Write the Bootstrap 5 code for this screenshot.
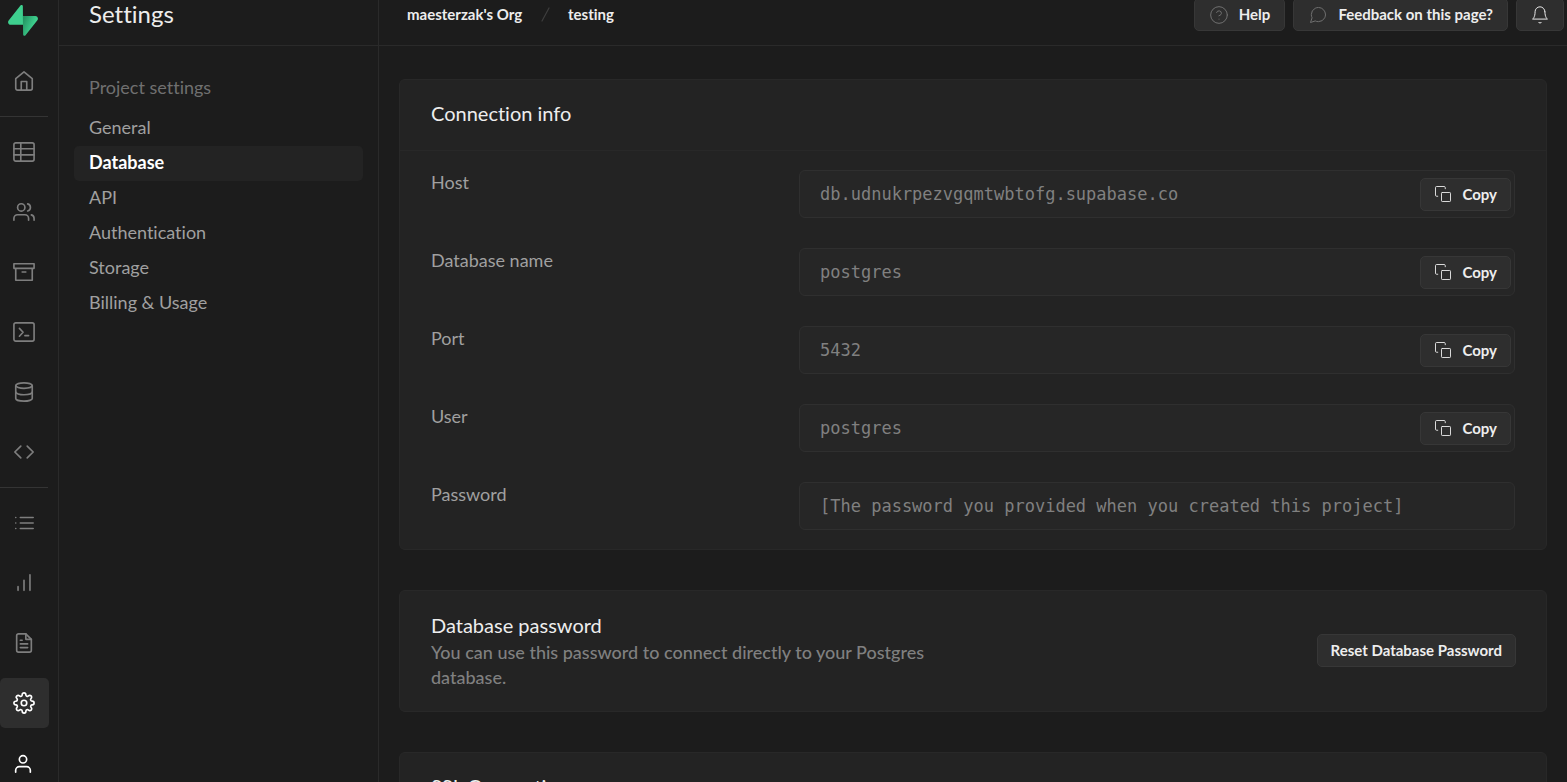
<!DOCTYPE html>
<html lang="en">
<head>
<meta charset="utf-8">
<meta name="viewport" content="width=device-width, initial-scale=1">
<title>Settings | Database</title>
<link href="https://cdn.jsdelivr.net/npm/bootstrap@5.3.0/dist/css/bootstrap.min.css" rel="stylesheet">
<style>
  :root {
    --line: #2a2a2a;
    --ink: #ededed;
    --soft: #a0a0a0;
    --muted: #707070;
  }
  body {
    background: #1c1c1c;
    color: var(--ink);
    font-family: Lato, "Liberation Sans", sans-serif;
    font-size: 18px;
    line-height: 25px;
    font-variant-ligatures: none;
  }
  a { color: inherit; text-decoration: none; }
  svg { fill: none; stroke: currentColor; stroke-width: 1.5; stroke-linecap: round; stroke-linejoin: round; display: block; flex: none; }

  /* icon rail */
  .rail { width: 59px; border-right: 1px solid var(--line); color: #7e7e7e; }
  .rail-items { width: 49px; gap: 10px; padding-top: 10px; }
  .rail-items svg { stroke-width: 1.8; }
  .rail-logo { height: 46px; padding: 5px 0 0 8px; }
  .rail-link { height: 50px; border-radius: 5px; padding-right: 1px; }
  .rail-link.on { background: #2e2e2e; color: #fff; }
  .rail-link.lit { color: #fff; padding-right: 3px; }
  .rail hr { margin: 0; border-color: #343434; opacity: 1; width: 48px; }

  /* settings menu */
  .menu { width: 320px; border-right: 1px solid var(--line); }
  .topline { height: 46px; border-bottom: 1px solid var(--line); }
  .menu .topline { padding-left: 30px; }
  .menu h1 { font-size: 24px; line-height: 27px; font-weight: 400; }
  .menu-body { padding: 29px 15px 0; }
  .menu-title { padding: 0 15px 11px; color: var(--muted); }
  .menu .nav-link { padding: 4px 15px 6px; color: var(--soft); border-radius: 5px; }
  .menu .nav-link.active { background: #232323; color: #fff; font-weight: 700; }

  /* top bar */
  .topbar { padding: 0 3px 0 28px; font-size: 15px; font-weight: 700; }
  .crumbs { gap: 16px; line-height: 29px; }
  .crumbs svg { color: #3e3e3e; margin-top: 6px; }
  .top-actions { gap: 8px; margin-top: -2px; }

  .btn-dim {
    --bs-btn-color: #ededed; --bs-btn-bg: #2e2e2e; --bs-btn-border-color: #373737;
    --bs-btn-hover-color: #fff; --bs-btn-hover-bg: #343434; --bs-btn-hover-border-color: #444;
    --bs-btn-padding-x: 13px; --bs-btn-padding-y: 4px;
    --bs-btn-font-size: 15px; --bs-btn-font-weight: 700; --bs-btn-line-height: 23px; --bs-btn-border-radius: 5px;
    display: inline-flex; align-items: center; gap: 10px; white-space: nowrap; flex: none;
  }
  .top-actions .btn-dim { --bs-btn-padding-x: 14px; }
  .btn-dim svg { stroke-width: 1.2; }
  .faint { color: #707070; }

  /* panels */
  .panels { padding: 33px 20px 0; gap: 40px; }
  .panel { background: #232323; border: 1px solid #282828; border-radius: 6px; }
  .panel h2 { font-size: 20px; line-height: 29px; font-weight: 400; margin: 0; }
  .panel-head { padding: 19px 31px 22px; border-bottom: 1px solid #282828; }
  .panel-rows { padding: 19px 31px; gap: 30px; }
  .panel-rows .row { --bs-gutter-x: 20px; }
  .panel-rows label { color: var(--soft); }
  .field { background: #262626; border: 1px solid #2f2f2f; border-radius: 6px; padding-right: 3px; height: 48px; }
  .field input {
    flex: 1; min-width: 0; padding: 0 20px; border: 0; background: transparent; color: #808080;
    font-family: "DejaVu Sans Mono", "Liberation Mono", monospace; font-size: 17px; line-height: 25px; outline: 0;
  }
  .panel-note { padding: 20px 30px 21px 31px; }
  .panel-note p { margin: 0; color: #808080; font-weight: 500; }
</style>
</head>
<body class="vh-100 overflow-hidden">
<div class="d-flex h-100">

  <nav class="rail flex-shrink-0" aria-label="Project">
    <a href="#" class="rail-logo d-block" aria-label="Supabase">
      <svg width="30" height="31" viewBox="0 0 109 113" stroke="none">
        <defs>
          <linearGradient id="g1" x1="53.97" y1="54.97" x2="94.16" y2="71.83" gradientUnits="userSpaceOnUse"><stop stop-color="#249361"/><stop offset="1" stop-color="#3ECF8E"/></linearGradient>
        </defs>
        <path stroke="none" fill="url(#g1)" d="M63.7 110.3C60.8 113.9 55 111.9 55 107.3L54 40.1H99.2C107.4 40.1 112 49.5 106.9 55.9Z"/>
        <path stroke="none" fill="#3ECF8E" d="M45.3 2.1C48.2 -1.5 54 .4 54 5L54.5 72.3H9.8C1.6 72.3 -2.9 62.8 2.2 56.4Z"/>
      </svg>
    </a>
    <div class="rail-items d-flex flex-column">
      <a href="#" class="rail-link d-flex align-items-center justify-content-center" aria-label="Home"><svg width="22" height="22" viewBox="0 0 24 24"><path d="M3 9.5 12 2l9 7.500V20a2 2 0 0 1-2 2H5a2 2 0 0 1-2-2z"/><path d="M9 22v-9.500h6V22"/></svg></a>
      <hr>
      <a href="#" class="rail-link d-flex align-items-center justify-content-center" aria-label="Table editor"><svg width="22" height="22" viewBox="0 0 24 24"><rect x="1" y="2" width="22" height="20" rx="2"/><path d="M1 8.500h22M1 15.200h22M8.500 2v20"/></svg></a>
      <a href="#" class="rail-link d-flex align-items-center justify-content-center" aria-label="Authentication"><svg width="22" height="22" viewBox="0 0 24 24"><path d="M17 21v-2a4 4 0 0 0-4-4H5a4 4 0 0 0-4 4v2"/><circle cx="9" cy="7" r="4"/><path d="M23 21v-2a4 4 0 0 0-3-3.870M16 3.130a4 4 0 0 1 0 7.750"/></svg></a>
      <a href="#" class="rail-link d-flex align-items-center justify-content-center" aria-label="Storage"><svg width="22" height="22" viewBox="0 0 24 24"><path d="M21 8v13H3V8M1 3h22v5H1zM10 12h4"/></svg></a>
      <a href="#" class="rail-link d-flex align-items-center justify-content-center" aria-label="SQL editor"><svg width="22" height="22" viewBox="0 0 24 24"><rect x="1" y="2" width="22" height="20" rx="2"/><path d="M7 8l4 4.300-4 4.300M13 16h4"/></svg></a>
      <a href="#" class="rail-link d-flex align-items-center justify-content-center" aria-label="Database"><svg width="22" height="22" viewBox="0 0 24 24"><ellipse cx="12" cy="5" rx="9" ry="3"/><path d="M21 12c0 1.660-4 3-9 3s-9-1.340-9-3"/><path d="M3 5v14c0 1.660 4 3 9 3s9-1.340 9-3V5"/></svg></a>
      <a href="#" class="rail-link d-flex align-items-center justify-content-center" aria-label="Functions"><svg width="22" height="22" viewBox="0 0 24 24"><path d="M15.500 18.500 22 12l-6.500-6.500M8.500 5.500 2 12l6.500 6.500"/></svg></a>
      <hr>
      <a href="#" class="rail-link d-flex align-items-center justify-content-center" aria-label="Logs"><svg width="22" height="22" viewBox="0 0 24 24"><path d="M8 6h14M8 12h14M8 18h14M3 6h.01M3 12h.01M3 18h.01"/></svg></a>
      <a href="#" class="rail-link d-flex align-items-center justify-content-center" aria-label="Reports"><svg width="22" height="22" viewBox="0 0 24 24"><path d="M12 20V9M18.500 20V3M5.500 20v-4"/></svg></a>
      <a href="#" class="rail-link d-flex align-items-center justify-content-center" aria-label="API docs"><svg width="22" height="22" viewBox="0 0 24 24"><path d="M14 2H6a2 2 0 0 0-2 2v16a2 2 0 0 0 2 2h12a2 2 0 0 0 2-2V8z"/><path d="M14 2v6h6M16 13H8M16 17H8M10 9H8"/></svg></a>
      <a href="#" class="rail-link on d-flex align-items-center justify-content-center" aria-label="Settings"><svg width="22" height="22" viewBox="0 0 24 24"><circle cx="12" cy="12" r="3"/><path d="M19.400 15a1.650 1.650 0 0 0 .330 1.820l.060.060a2 2 0 1 1-2.830 2.830l-.060-.060a1.650 1.650 0 0 0-1.820-.330 1.650 1.650 0 0 0-1 1.510V21a2 2 0 0 1-4 0v-.090A1.650 1.650 0 0 0 9 19.400a1.650 1.650 0 0 0-1.820.330l-.060.060a2 2 0 1 1-2.830-2.830l.060-.060a1.650 1.650 0 0 0 .330-1.820 1.650 1.650 0 0 0-1.510-1H3a2 2 0 0 1 0-4h.090A1.650 1.650 0 0 0 4.600 9a1.650 1.650 0 0 0-.330-1.820l-.060-.060a2 2 0 1 1 2.830-2.830l.060.060a1.650 1.650 0 0 0 1.820.330H9a1.650 1.650 0 0 0 1-1.510V3a2 2 0 0 1 4 0v.090a1.650 1.650 0 0 0 1 1.510 1.650 1.650 0 0 0 1.820-.330l.060-.060a2 2 0 1 1 2.830 2.830l-.060.060a1.650 1.650 0 0 0-.330 1.820V9a1.650 1.650 0 0 0 1.510 1H21a2 2 0 0 1 0 4h-.090a1.650 1.650 0 0 0-1.510 1z"/></svg></a>
      <a href="#" class="rail-link lit d-flex align-items-center justify-content-center" aria-label="Account"><svg width="22" height="22" viewBox="0 0 24 24"><path d="M20 22v-2a4 4 0 0 0-4-4H8a4 4 0 0 0-4 4v2"/><circle cx="12" cy="8" r="4"/></svg></a>
    </div>
  </nav>

  <aside class="menu flex-shrink-0">
    <div class="topline"><h1 class="m-0">Settings</h1></div>
    <div class="menu-body">
      <div class="menu-title">Project settings</div>
      <nav class="nav flex-column" aria-label="Project settings">
        <a class="nav-link" href="#">General</a>
        <a class="nav-link active" aria-current="page" href="#">Database</a>
        <a class="nav-link" href="#">API</a>
        <a class="nav-link" href="#">Authentication</a>
        <a class="nav-link" href="#">Storage</a>
        <a class="nav-link" href="#">Billing &amp; Usage</a>
      </nav>
    </div>
  </aside>

  <main class="flex-grow-1 overflow-hidden">
    <header class="topline topbar d-flex justify-content-between align-items-start">
      <div class="crumbs d-flex">
        <a href="#">maesterzak's Org</a>
        <svg width="14" height="17" viewBox="0 0 14 17"><path d="M11 2 4 15" stroke-width="1.200"/></svg>
        <a href="#">testing</a>
      </div>
      <div class="top-actions d-flex">
        <button type="button" class="btn btn-dim"><svg class="faint" width="20" height="20" viewBox="0 0 24 24"><circle cx="12" cy="12" r="10"/><path d="M9.090 9a3 3 0 0 1 5.830 1c0 2-3 3-3 3M12 17h.01"/></svg>Help</button>
        <button type="button" class="btn btn-dim"><svg class="faint" width="20" height="20" viewBox="0 0 24 24"><path d="M21 11.500a8.380 8.380 0 0 1-.9 3.800 8.500 8.500 0 0 1-7.600 4.700 8.380 8.380 0 0 1-3.800-.9L3 21l1.900-5.700a8.380 8.380 0 0 1-.9-3.800 8.500 8.500 0 0 1 4.700-7.600 8.380 8.380 0 0 1 3.800-.9h.5a8.480 8.480 0 0 1 8 8z"/></svg>Feedback on this page?</button>
        <button type="button" class="btn btn-dim" aria-label="Notifications"><svg width="18" height="20" viewBox="1 0 22 24"><path d="M18 8A6 6 0 0 0 6 8c0 7-3 9-3 9h18s-3-2-3-9M13.730 21a2 2 0 0 1-3.460 0"/></svg></button>
      </div>
    </header>

    <div class="panels d-flex flex-column">
      <section class="panel">
        <div class="panel-head"><h2>Connection info</h2></div>
        <form class="panel-rows d-flex flex-column">
          <div class="row">
            <label class="col-4" for="host">Host</label>
            <div class="col-8"><div class="field d-flex align-items-center"><input id="host" readonly value="db.udnukrpezvgqmtwbtofg.supabase.co"><button type="button" class="btn btn-dim"><svg width="18" height="18" viewBox="0 0 24 24"><rect x="10" y="10" width="12" height="12" rx="1"/><path d="M5 15H3.500A1.500 1.500 0 0 1 2 13.500v-10A1.500 1.500 0 0 1 3.500 2h10A1.500 1.500 0 0 1 15 3.500V5"/></svg>Copy</button></div></div>
          </div>
          <div class="row">
            <label class="col-4" for="dbname">Database name</label>
            <div class="col-8"><div class="field d-flex align-items-center"><input id="dbname" readonly value="postgres"><button type="button" class="btn btn-dim"><svg width="18" height="18" viewBox="0 0 24 24"><rect x="10" y="10" width="12" height="12" rx="1"/><path d="M5 15H3.500A1.500 1.500 0 0 1 2 13.500v-10A1.500 1.500 0 0 1 3.500 2h10A1.500 1.500 0 0 1 15 3.500V5"/></svg>Copy</button></div></div>
          </div>
          <div class="row">
            <label class="col-4" for="port">Port</label>
            <div class="col-8"><div class="field d-flex align-items-center"><input id="port" readonly value="5432"><button type="button" class="btn btn-dim"><svg width="18" height="18" viewBox="0 0 24 24"><rect x="10" y="10" width="12" height="12" rx="1"/><path d="M5 15H3.500A1.500 1.500 0 0 1 2 13.500v-10A1.500 1.500 0 0 1 3.500 2h10A1.500 1.500 0 0 1 15 3.500V5"/></svg>Copy</button></div></div>
          </div>
          <div class="row">
            <label class="col-4" for="user">User</label>
            <div class="col-8"><div class="field d-flex align-items-center"><input id="user" readonly value="postgres"><button type="button" class="btn btn-dim"><svg width="18" height="18" viewBox="0 0 24 24"><rect x="10" y="10" width="12" height="12" rx="1"/><path d="M5 15H3.500A1.500 1.500 0 0 1 2 13.500v-10A1.500 1.500 0 0 1 3.500 2h10A1.500 1.500 0 0 1 15 3.500V5"/></svg>Copy</button></div></div>
          </div>
          <div class="row">
            <label class="col-4" for="password">Password</label>
            <div class="col-8"><div class="field d-flex align-items-center"><input id="password" readonly value="[The password you provided when you created this project]"></div></div>
          </div>
        </form>
      </section>

      <section class="panel panel-note d-flex justify-content-between align-items-center">
        <div class="w-50">
          <h2>Database password</h2>
          <p>You can use this password to connect directly to your Postgres database.</p>
        </div>
        <button type="button" class="btn btn-dim">Reset Database Password</button>
      </section>

      <section class="panel">
        <div class="panel-head"><h2>SSL Connection</h2></div>
      </section>
    </div>
  </main>
</div>
<script src="https://cdn.jsdelivr.net/npm/bootstrap@5.3.0/dist/js/bootstrap.bundle.min.js"></script>
</body>
</html>
